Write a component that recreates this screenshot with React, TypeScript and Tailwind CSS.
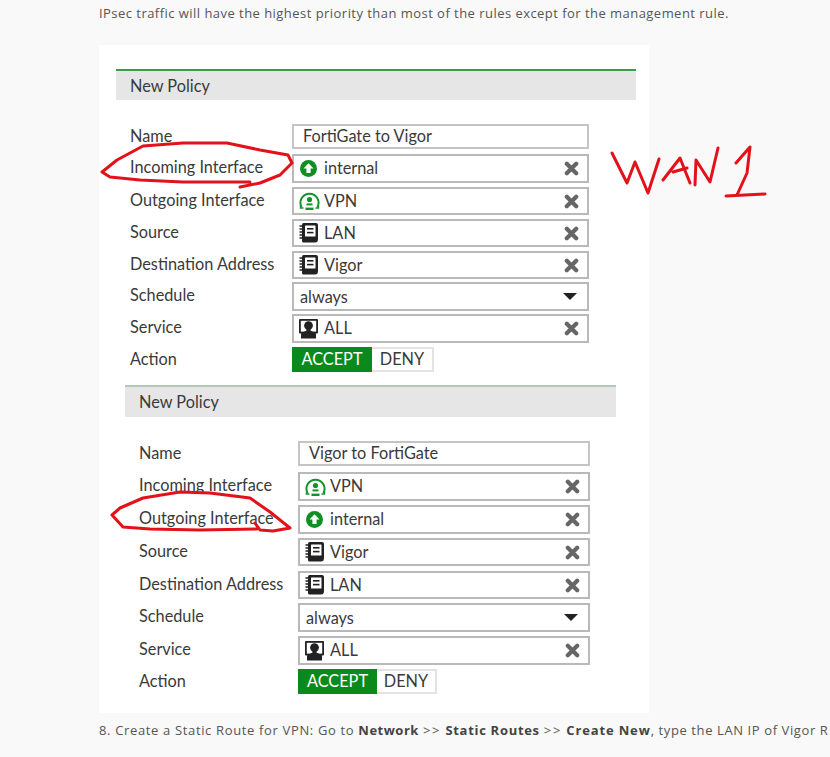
import React from 'react';

type IconName = 'internal' | 'vpn' | 'address' | 'all';

interface RowData {
  label: string;
  slot: string;
  height: string;
  labelPad?: string;
  value?: string;
  icon?: IconName;
  kind?: 'text' | 'tag' | 'select' | 'action';
  acceptWidth?: string;
  denyWidth?: string;
}

const InternalIcon = () => (
  <svg width="17" height="17" viewBox="0 0 17 17" className="ml-[1px]">
    <circle cx="8.5" cy="8.5" r="8.5" fill="#0f8f22" />
    <path d="M8.5 3.2 L13.5 8.4 H10.6 V13 H6.4 V8.4 H3.5 Z" fill="#fff" />
  </svg>
);

const VpnIcon = () => (
  <svg width="21" height="22" viewBox="0 0 21 22">
    <path d="M2.6 17 A9 9 0 1 1 18.4 17" fill="none" stroke="#14932a" strokeWidth="2" />
    <path d="M1.6 15.5 L1.6 18 L4.5 18 M19.4 15.5 L19.4 18 L16.5 18" fill="none" stroke="#14932a" strokeWidth="1.6" />
    <circle cx="10.5" cy="9.5" r="2.6" fill="#14932a" />
    <rect x="7.5" y="13.4" width="6" height="2" fill="#14932a" />
    <rect x="6.5" y="17.6" width="8" height="2.4" fill="#14932a" />
  </svg>
);

const AddressIcon = () => (
  <svg width="19" height="20" viewBox="0 0 19 20">
    <path d="M3 1.5 Q3 0 4.5 0 H17 Q19 0 19 2 V16 Q19 19.5 16 19.5 H4.5 Q3 19.5 3 18 Z" fill="#222" />
    <rect x="6" y="2.4" width="10.5" height="11" rx="0.5" fill="#fff" />
    <rect x="8" y="5" width="6.5" height="1.6" fill="#222" />
    <rect x="8" y="8.8" width="6.5" height="1.6" fill="#222" />
    <path d="M0.5 3 H4 M0.5 6 H4 M0.5 9 H4 M0.5 12 H4 M0.5 15 H4" stroke="#222" strokeWidth="1.3" />
  </svg>
);

const AllIcon = () => (
  <svg width="19" height="20" viewBox="0 0 19 20">
    <rect x="0" y="0" width="19" height="14.5" rx="1" fill="#222" />
    <rect x="1.8" y="1.8" width="15.4" height="10.8" fill="#fff" />
    <circle cx="9.5" cy="6.6" r="4.4" fill="#222" />
    <path d="M7.5 9 H11.5 V11.5 L17 14.5 V19.5 H2 V14.5 L7.5 11.5 Z" fill="#222" />
  </svg>
);

const icons: Record<IconName, React.ReactNode> = {
  internal: <InternalIcon />,
  vpn: <VpnIcon />,
  address: <AddressIcon />,
  all: <AllIcon />,
};

const CloseIcon = () => (
  <svg width="15" height="15" viewBox="0 0 15 15" className="shrink-0">
    <path d="M2.8 2.8 L12.2 12.2 M12.2 2.8 L2.8 12.2" stroke="#666" strokeWidth="4.2" strokeLinecap="round" />
  </svg>
);

const Field = ({ row }: { row: RowData }) => {
  if (row.kind === 'action') {
    return (
      <div className="flex h-[25px] leading-none">
        <div className={`flex ${row.acceptWidth} items-center justify-center bg-[#0a8a1c] pb-[1px] text-white`}>ACCEPT</div>
        <div className={`flex ${row.denyWidth} items-center justify-center border-2 border-l-0 border-[#e3e3e3] bg-white pb-[1px] text-[#3a3a3a]`}>DENY</div>
      </div>
    );
  }

  if (row.kind === 'select') {
    return (
      <div className={`flex ${row.height} items-center justify-between border-2 border-[#b9b9b9] bg-white pl-[6px] pr-[10px]`}>
        <span className="pt-[1px]">{row.value}</span>
        <svg width="14" height="7" viewBox="0 0 14 7">
          <path d="M0 0 H14 L7 7 Z" fill="#222" />
        </svg>
      </div>
    );
  }

  if (row.kind === 'tag') {
    return (
      <div className={`flex ${row.height} items-center border-2 border-[#b9b9b9] bg-white pl-[5px] pr-[8px]`}>
        <span className="flex w-[25px] shrink-0 items-center">{row.icon && icons[row.icon]}</span>
        <span className="flex-1">{row.value}</span>
        <CloseIcon />
      </div>
    );
  }

  return (
    <div className={`flex ${row.height} items-center border-2 border-[#c4c4c4] bg-white pb-[1px] pl-[9px]`}>
      {row.value}
    </div>
  );
};

const PolicyForm = ({
  rows,
  className,
  labelWidth,
  fieldWidth,
  barClass,
}: {
  rows: RowData[];
  className: string;
  labelWidth: string;
  fieldWidth: string;
  barClass: string;
}) => (
  <div className={className}>
    <div className={`flex items-center border-t-2 bg-[#e6e6e6] pl-[14px] pt-[1px] ${barClass}`}>New Policy</div>
    <div className="mt-[24px] pl-[14px]">
      {rows.map((row) => (
        <div key={row.label} className={`flex ${row.slot}`}>
          <div className={`${labelWidth} ${row.height} ${row.labelPad ?? 'pb-[2px]'} flex shrink-0 items-center`}>{row.label}</div>
          <div className={fieldWidth}>
            <Field row={row} />
          </div>
        </div>
      ))}
    </div>
  </div>
);

const firstRows: RowData[] = [
  { label: 'Name', slot: 'h-[30px]', height: 'h-[25px]', labelPad: 'pb-0', value: 'FortiGate to Vigor', kind: 'text' },
  { label: 'Incoming Interface', slot: 'h-[33px]', height: 'h-[29px]', value: 'internal', icon: 'internal', kind: 'tag' },
  { label: 'Outgoing Interface', slot: 'h-[32px]', height: 'h-[28px]', value: 'VPN', icon: 'vpn', kind: 'tag' },
  { label: 'Source', slot: 'h-[32px]', height: 'h-[28px]', value: 'LAN', icon: 'address', kind: 'tag' },
  { label: 'Destination Address', slot: 'h-[31px]', height: 'h-[28px]', value: 'Vigor', icon: 'address', kind: 'tag' },
  { label: 'Schedule', slot: 'h-[32px]', height: 'h-[29px]', value: 'always', kind: 'select' },
  { label: 'Service', slot: 'h-[33px]', height: 'h-[29px]', value: 'ALL', icon: 'all', kind: 'tag' },
  { label: 'Action', slot: 'h-[25px]', height: 'h-[25px]', labelPad: 'pb-0', kind: 'action', acceptWidth: 'w-[80px]', denyWidth: 'w-[62px]' },
];

const secondRows: RowData[] = [
  { label: 'Name', slot: 'h-[31px]', height: 'h-[25px]', labelPad: 'pb-0', value: 'Vigor to FortiGate', kind: 'text' },
  { label: 'Incoming Interface', slot: 'h-[33px]', height: 'h-[29px]', value: 'VPN', icon: 'vpn', kind: 'tag' },
  { label: 'Outgoing Interface', slot: 'h-[33px]', height: 'h-[29px]', value: 'internal', icon: 'internal', kind: 'tag' },
  { label: 'Source', slot: 'h-[33px]', height: 'h-[28px]', value: 'Vigor', icon: 'address', kind: 'tag' },
  { label: 'Destination Address', slot: 'h-[32px]', height: 'h-[28px]', value: 'LAN', icon: 'address', kind: 'tag' },
  { label: 'Schedule', slot: 'h-[33px]', height: 'h-[29px]', value: 'always', kind: 'select' },
  { label: 'Service', slot: 'h-[33px]', height: 'h-[29px]', value: 'ALL', icon: 'all', kind: 'tag' },
  { label: 'Action', slot: 'h-[25px]', height: 'h-[25px]', labelPad: 'pb-0', kind: 'action', acceptWidth: 'w-[79px]', denyWidth: 'w-[60px]' },
];

// hand drawn red marks on top of the screenshot
const Scribbles = () => (
  <svg className="pointer-events-none absolute left-0 top-0" width="830" height="757" viewBox="0 0 830 757">
    <g fill="none" stroke="#e2111a" strokeLinecap="round" strokeLinejoin="round">
      <path
        strokeWidth="3"
        d="M240 187 L260 183 L280 175 L292 163 L288 155 L260 150 L227 143 L183 143 L143 146 L117 160 L102 172 L110 177 L140 180 L183 182 L217 182 L250 182"
      />
      <path
        strokeWidth="3"
        d="M112 515 L120 508 L143 498 L180 492 L210 493 L250 498 L270 512 L290 528 L273 531 L260 530 L255 523 M112 515 L123 527 L150 529 L200 530 L257 529"
      />
      <path
        strokeWidth="3"
        d="M612 153 L627 183 L635 162 L648 193 L659 159 M663 180 L680 158 L690 183 M673 172 L687 168 M695 185 L696 160 L710 182 L718 148 M736 163 L750 147 L747 173 L737 195 M726 196 L765 194"
      />
    </g>
  </svg>
);

export default function App() {
  return (
    <div className="relative h-[757px] w-[830px] overflow-hidden bg-[#f9f9f9] pl-[99px] font-['Lato',sans-serif] text-[16.3px] text-[#3a3a3a]">
      <p className="mb-[19px] whitespace-nowrap font-['Open_Sans',sans-serif] text-[13px] leading-[26px] tracking-[0.46px] text-[#555]">
        IPsec traffic will have the highest priority than most of the rules except for the management rule.
      </p>

      <div className="h-[668px] w-[550px] bg-white pt-[24px]">
        <PolicyForm
          rows={firstRows}
          className="ml-[17px] w-[520px]"
          labelWidth="w-[162px]"
          fieldWidth="w-[297px]"
          barClass="h-[31px] border-[#3f9a4c]"
        />
        <PolicyForm
          rows={secondRows}
          className="ml-[26px] mt-[13px] w-[491px]"
          labelWidth="w-[159px]"
          fieldWidth="w-[292px]"
          barClass="h-[32px] border-[#b4c8b4]"
        />
      </div>

      <p className="mt-[4px] whitespace-nowrap font-['Open_Sans',sans-serif] text-[13px] leading-[26px] tracking-[0.65px] text-[#555]">
        8. Create a Static Route for VPN: Go to <b className="tracking-[0.5px] text-[#444]">Network</b> <span className="tracking-[1.8px]">&gt;&gt;</span>{' '}
        <b className="tracking-[0.7px] text-[#444]">Static Routes</b> <span className="tracking-[1.8px]">&gt;&gt;</span>{' '}
        <b className="tracking-[0.85px] text-[#444]">Create New</b><span className="tracking-[0.6px]">, type the LAN IP of Vigor R</span>
      </p>

      <Scribbles />
    </div>
  );
}
